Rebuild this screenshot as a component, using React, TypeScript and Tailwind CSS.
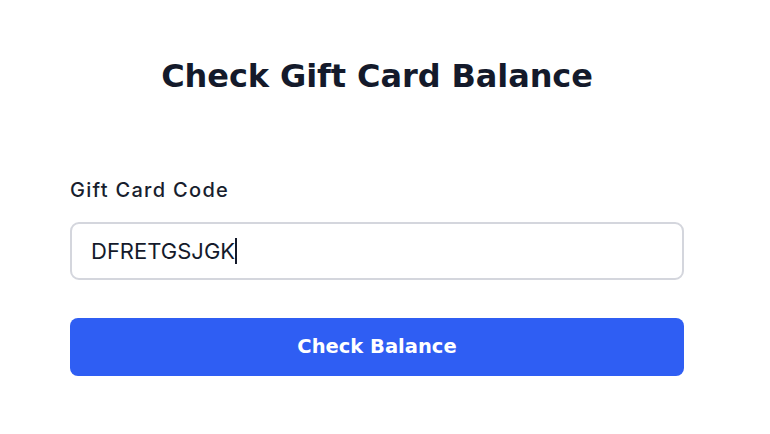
export default function App() {
  const code = 'DFRETGSJGK'

  return (
    <div className="min-h-screen bg-white font-['Inter',sans-serif]">
      <div className="w-[614px] ml-[70px] pt-[56px]">
        {/* Title */}
        <h1 className="text-center font-['DejaVu_Sans',sans-serif] text-[32px] leading-[40px] font-bold tracking-[-0.1px] text-[#141a2b]">
          Check Gift Card Balance
        </h1>

        {/* Code field */}
        <div className="mt-[82px]">
          <label className="block text-[20px] leading-[24px] font-medium tracking-[1.3px] text-[#181e2e]">
            Gift Card Code
          </label>
          <div className="mt-[20px] h-[58px] flex items-center px-[19px] border-2 border-[#d4d6dd] rounded-[9px]">
            <span className="text-[22px] text-[#141a2b]">{code}</span>
            <span className="w-[1.5px] h-[26px] bg-[#141a2b]"></span>
          </div>
        </div>

        {/* Submit */}
        <button className="mt-[38px] w-full h-[58px] rounded-[8px] bg-[#2f5ef3] text-white font-['DejaVu_Sans',sans-serif] text-[19.5px] font-bold">
          Check Balance
        </button>
      </div>
    </div>
  )
}
